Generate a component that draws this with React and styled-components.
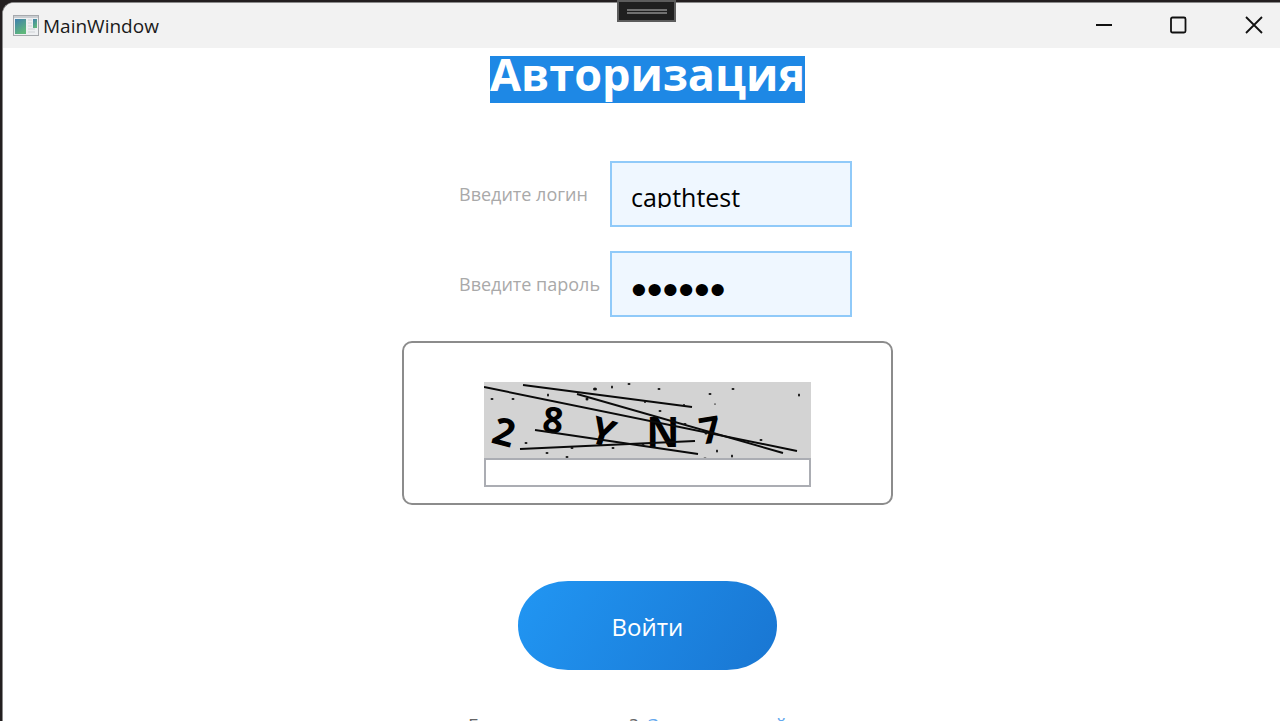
import React from "react";
import styled, { createGlobalStyle } from "styled-components";

const GlobalStyle = createGlobalStyle`
  * { box-sizing: border-box; }
  body {
    margin: 0;
    background: #231f20;
    font-family: "Open Sans", "Noto Sans", sans-serif;
  }
`;

const Desktop = styled.div`
  position: relative;
  height: 100vh;
  overflow: hidden;
  padding: 2px 0 0 2px;
`;

const Window = styled.div`
  margin-right: -12px;
  min-height: 100vh;
  background: #fff;
  border: 1px solid #8a8a8a;
  border-width: 1px 0 0 1px;
  border-radius: 12px 12px 0 0;
  overflow: hidden;
`;

const TitleBar = styled.header`
  display: flex;
  align-items: center;
  height: 45px;
  padding: 0 1px 0 10px;
  background: #f2f2f2;
`;

const WindowName = styled.span`
  flex: 1;
  margin-left: 4px;
  font-size: 19px;
  line-height: 26px;
  color: #1a1a1a;
`;

const WindowButton = styled.button`
  display: grid;
  place-items: center;
  align-self: flex-start;
  width: 75px;
  height: 43px;
  padding: 0;
  border: 0;
  background: none;
`;

const Grip = styled.div`
  position: absolute;
  top: 0;
  left: 617px;
  display: flex;
  flex-direction: column;
  align-items: center;
  gap: 1px;
  width: 59px;
  height: 22px;
  padding-top: 7px;
  background: #1f1f1f;
  border: 2px solid #5c5c5c;

  &::before,
  &::after {
    content: "";
    width: 40px;
    height: 2px;
    background: #707070;
  }
`;

const Content = styled.main`
  display: flex;
  flex-direction: column;
  align-items: center;
  padding-top: 8px;
`;

const Title = styled.h1`
  height: 47px;
  margin: 0 0 58px;
  overflow: hidden;
  background: #1e88e5;
  color: #fff;
  font-size: 45px;
  font-weight: 700;
  line-height: 36px;
`;

const Form = styled.form`
  display: flex;
  flex-direction: column;
  align-items: center;
`;

const FieldRow = styled.div`
  display: flex;
  align-items: center;
  width: 409px;
  margin-bottom: 24px;
  padding-left: 16px;
`;

const Label = styled.label`
  flex: 1;
  color: #a9a9a9;
  font-size: 18px;
  line-height: 26px;
  white-space: nowrap;
`;

const FieldBox = styled.div`
  width: 242px;
  height: 66px;
  padding: 18px 19px;
  border: 2px solid #90caf9;
  background: #eff7ff;
`;

const FieldInput = styled.input`
  display: block;
  width: 100%;
  height: 27px;
  padding: ${(p) => (p.type === "password" ? 10 : 4)}px 0 0;
  border: 0;
  outline: 0;
  overflow: hidden;
  background: none;
  color: #000;
  font-family: ${(p) => (p.type === "password" ? '"Liberation Sans"' : '"Open Sans"')}, sans-serif;
  font-size: ${(p) => (p.type === "password" ? 45 : 25)}px;
  line-height: 34px;
`;

const CaptchaPanel = styled.section`
  display: flex;
  flex-direction: column;
  align-items: center;
  width: 491px;
  height: 164px;
  margin-bottom: 76px;
  padding-top: 39px;
  border: 2px solid #8c8c8c;
  border-radius: 10px;
`;

const CaptchaImage = styled.svg`
  display: block;
  width: 327px;
  height: 76px;
  background: #d3d3d3;
`;

const CaptchaInput = styled.input`
  width: 327px;
  height: 29px;
  padding: 0 4px;
  border: 2px solid #abadb3;
  background: #fff;
  font-size: 19px;
`;

const SubmitButton = styled.button`
  width: 259px;
  height: 89px;
  margin-bottom: 42px;
  padding: 2px 0 0;
  border: 0;
  border-radius: 50px / 44px;
  background: linear-gradient(120deg, #2196f3, #1976d2);
  color: #fff;
  font-family: inherit;
  font-size: 24px;
`;

const Register = styled.p`
  margin: 0;
  color: #666;
  font-size: 19px;
  line-height: 26px;
  white-space: nowrap;
`;

const RegisterLink = styled.a`
  margin-left: 10px;
  color: #64a8ee;
  text-decoration: none;
`;

const strokes = [
  [0, 5, 313, 69],
  [39, 3, 208, 25],
  [93, 12, 299, 71],
  [51, 48, 214, 72],
  [36, 67, 211, 59],
];

const glyphs = [
  ["2", 20, 50, 15, 38],
  ["8", 69, 38, 6, 36],
  ["Y", 119, 50, 18, 38],
  ["N", 179, 50, 0, 41],
  ["7", 226, 48, -9, 37],
];

const specks = [
  [8, 17, 3, 2], [29, 17, 3, 2], [64, 13, 2, 3], [111, 7, 4, 3],
  [128, 5, 2, 3], [145, 2, 3, 2], [103, 17, 3, 3], [161, 20, 2, 2],
  [42, 61, 3, 2], [63, 71, 3, 2], [83, 75, 3, 2], [88, 66, 3, 2],
  [129, 66, 3, 2], [159, 63, 3, 2], [175, 7, 3, 2], [226, 12, 3, 2],
  [249, 7, 3, 2], [315, 13, 2, 3], [200, 23, 2, 2], [231, 22, 2, 1],
  [176, 29, 3, 2], [201, 42, 3, 2], [222, 51, 3, 3], [277, 58, 3, 2],
  [233, 69, 2, 3], [248, 74, 2, 3], [221, 76, 3, 1],
];

function Captcha() {
  return (
    <CaptchaImage viewBox="0 0 327 76" role="img" aria-label="CAPTCHA">
      {glyphs.map(([char, x, y, angle, size]) => (
        <text
          key={char}
          x={x}
          y={y + size * 0.357}
          transform={`rotate(${angle} ${x} ${y})`}
          textAnchor="middle"
          fontFamily="Open Sans, sans-serif"
          fontWeight="700"
          fontSize={size}
        >
          {char}
        </text>
      ))}
      {strokes.map(([x1, y1, x2, y2]) => (
        <line key={x1} x1={x1} y1={y1} x2={x2} y2={y2} stroke="#0a0a0a" strokeWidth="2" />
      ))}
      {specks.map(([x, y, w, h]) => (
        <ellipse key={`${x}-${y}`} cx={x} cy={y} rx={w / 2} ry={h / 2} fill="#111" />
      ))}
    </CaptchaImage>
  );
}

function AppIcon() {
  return (
    <svg width="26" height="22" viewBox="0 0 26 22" aria-hidden="true">
      <defs>
        <linearGradient id="pane" x1="0" y1="0" x2="0.5" y2="1">
          <stop offset="0" stopColor="#3f7fae" />
          <stop offset="1" stopColor="#5fb77c" />
        </linearGradient>
      </defs>
      <rect x="0.5" y="0.5" width="25" height="20" fill="#eef0f2" stroke="#a6a9ad" />
      <rect x="1" y="1" width="24" height="2" fill="#c9cdd1" />
      <rect x="2" y="4" width="11" height="15" fill="url(#pane)" />
      <path d="M15 5h4M15 8h4M15 11h4M15 14h7M15 17h7" stroke="#cfd2d6" />
      <rect x="20" y="4" width="4" height="9" fill="url(#pane)" />
    </svg>
  );
}

function ControlIcon({ d }) {
  return (
    <svg width="18" height="18" viewBox="0 0 18 18" fill="none" stroke="#111" strokeWidth="1.8" aria-hidden="true">
      <path d={d} />
    </svg>
  );
}

export default function App() {
  return (
    <Desktop>
      <GlobalStyle />
      <Window>
        <TitleBar>
          <AppIcon />
          <WindowName>MainWindow</WindowName>
          <WindowButton aria-label="Свернуть">
            <ControlIcon d="M1 9H17" />
          </WindowButton>
          <WindowButton aria-label="Развернуть">
            <ControlIcon d="M2.5 1.5H14Q15.5 1.5 15.5 3V15Q15.5 16.5 14 16.5H2.5Q1 16.5 1 15V3Q1 1.5 2.5 1.5Z" />
          </WindowButton>
          <WindowButton aria-label="Закрыть">
            <ControlIcon d="M1 1L17 17M17 1L1 17" />
          </WindowButton>
        </TitleBar>
        <Content>
          <Title>Авторизация</Title>
          <Form onSubmit={(e) => e.preventDefault()}>
            <FieldRow>
              <Label htmlFor="login">Введите логин</Label>
              <FieldBox>
                <FieldInput id="login" type="text" defaultValue="capthtest" spellCheck={false} />
              </FieldBox>
            </FieldRow>
            <FieldRow>
              <Label htmlFor="password">Введите пароль</Label>
              <FieldBox>
                <FieldInput id="password" type="password" defaultValue="secret" />
              </FieldBox>
            </FieldRow>
            <CaptchaPanel>
              <Captcha />
              <CaptchaInput type="text" aria-label="CAPTCHA" />
            </CaptchaPanel>
            <SubmitButton type="submit">Войти</SubmitButton>
          </Form>
          <Register>
            Еще нет аккаунта?
            <RegisterLink href="#register">Зарегистрируйтесь</RegisterLink>
          </Register>
        </Content>
      </Window>
      <Grip />
    </Desktop>
  );
}
